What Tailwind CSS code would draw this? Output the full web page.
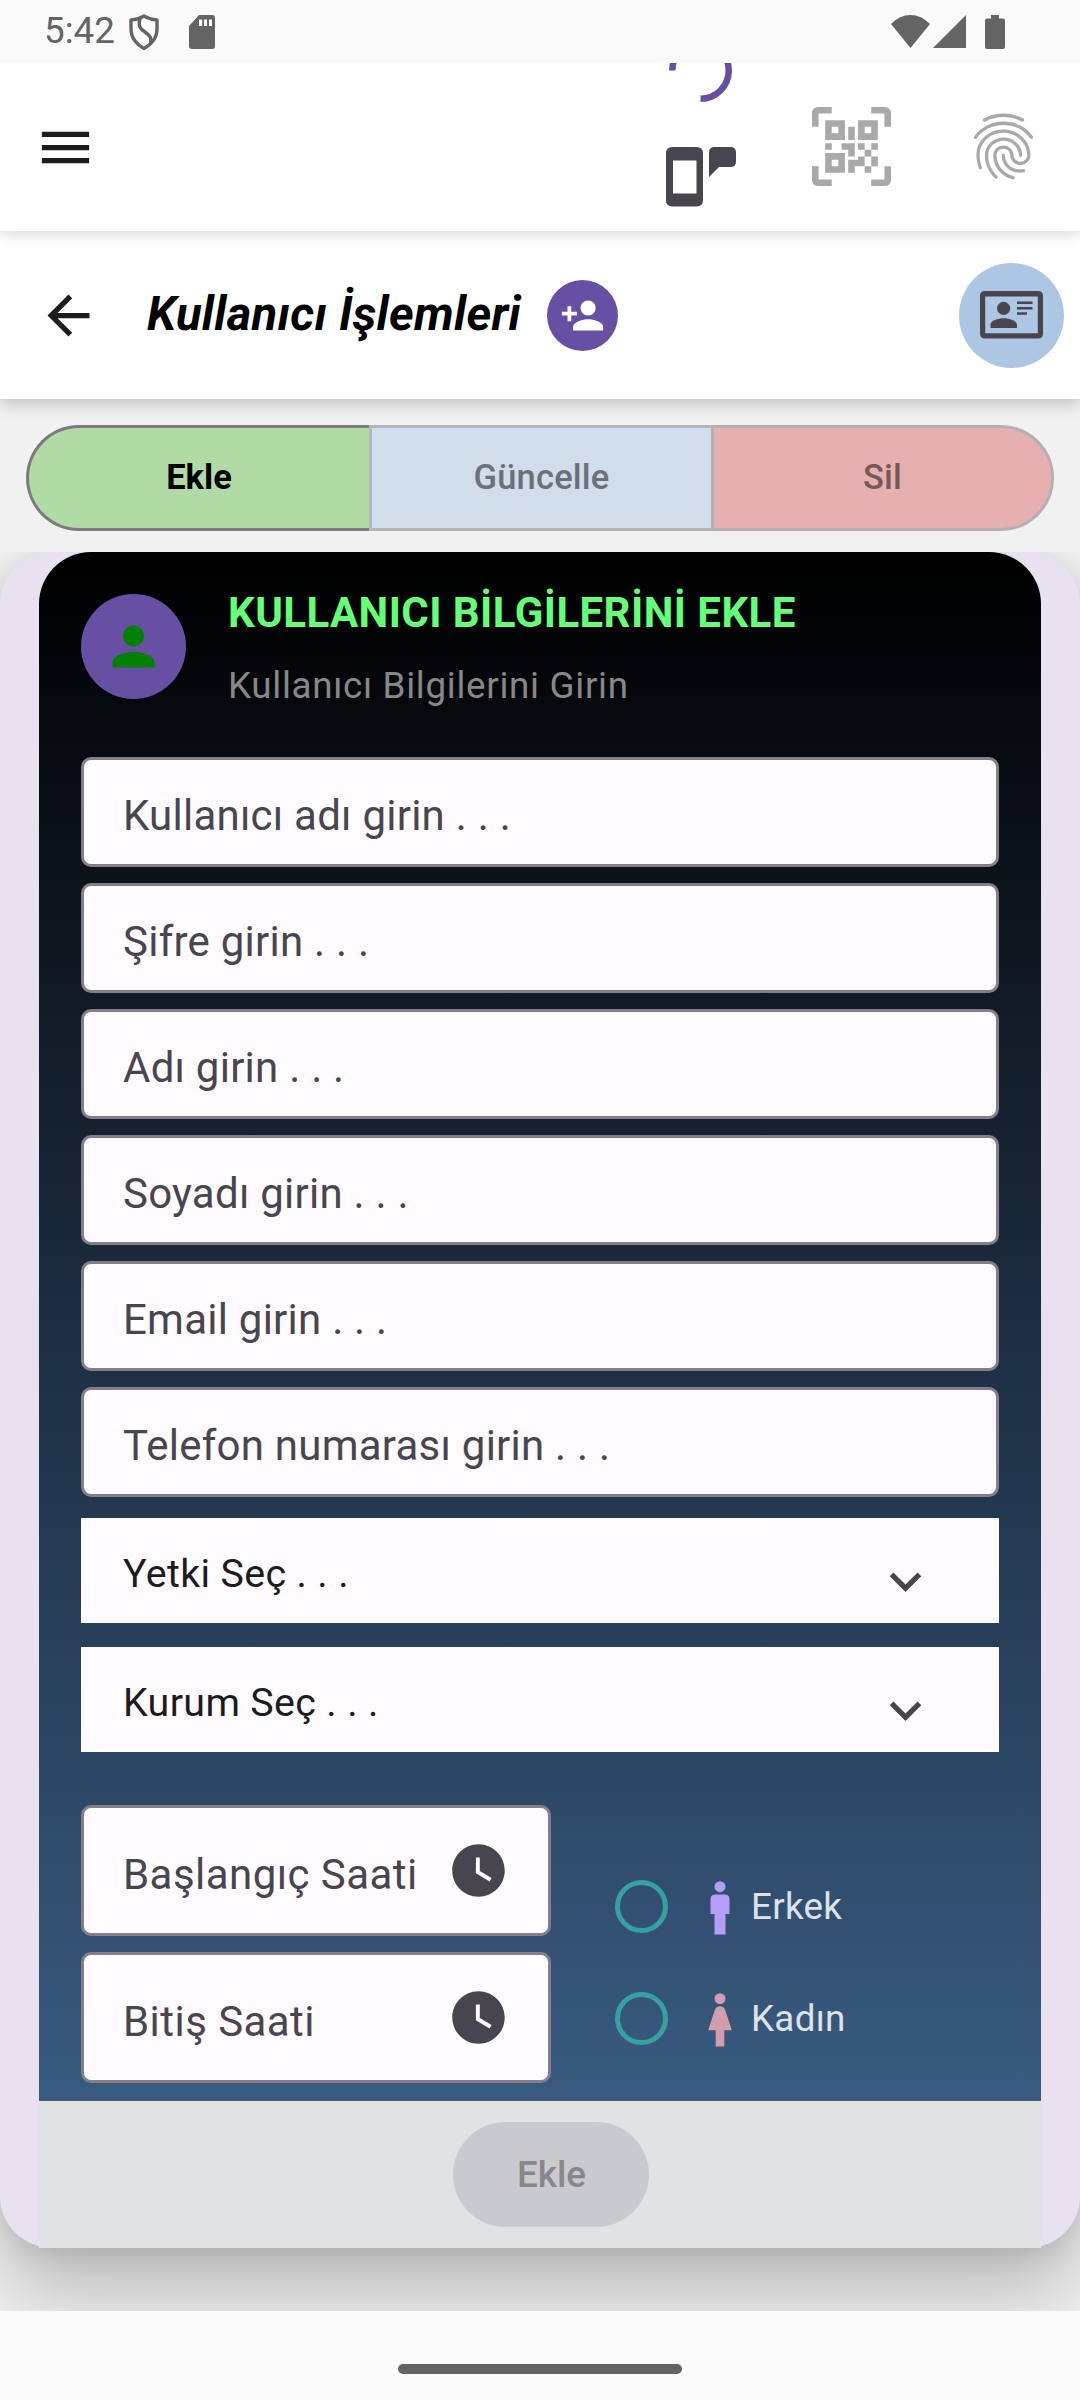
<!DOCTYPE html>
<html lang="tr">
<head>
<meta charset="utf-8">
<title>Kullanıcı İşlemleri</title>
<script src="https://cdn.jsdelivr.net/npm/@tailwindcss/browser@4"></script>
</head>
<body class="bg-[#fafafa]">
<div class="flex h-[2400px] w-[1080px] flex-col overflow-hidden font-['Roboto',sans-serif] whitespace-nowrap">

  <!-- status bar -->
  <div class="relative z-30 flex h-[63px] shrink-0 items-center bg-[#fafafa] pl-[44px] pr-[75px] text-[#646464]">
    <span class="w-[85px] text-[36.75px] leading-none">5:42</span>
    <svg class="h-[36px] w-[30px]" viewBox="0 0 30 36" fill="none" stroke="currentColor" stroke-width="3.4" stroke-linejoin="round"><path d="M15 2C11 4.500 7 5.500 2 6V15C2 24 8 31 15 34.500C22 31 28 24 28 15V6C23 5.500 19 4.500 15 2Z"/><path d="M11 4.500C9 12 11 15 16 18C21 21.500 23 24 21.500 30"/></svg>
    <svg class="ml-[30px] h-[34px] w-[26px]" viewBox="0 0 26 34" fill="currentColor" fill-rule="evenodd"><path d="M10 0H23Q26 0 26 3V31Q26 34 23 34H3Q0 34 0 31V11ZM10 4.500V11H13.200V4.500ZM15 4.500V11H18V4.500ZM20 4.500V11H23V4.500Z"/></svg>
    <svg class="ml-auto h-[33px] w-[39px]" viewBox="0 0 40 33" preserveAspectRatio="none" fill="currentColor"><path d="M20 33L0 9Q9 0 20 0Q31 0 40 9Z"/></svg>
    <svg class="ml-[3px] h-[33px] w-[33px]" viewBox="0 0 33 33" fill="currentColor"><path d="M33 0V33H0Z"/></svg>
    <svg class="ml-[19px] h-[34px] w-[20px]" viewBox="0 0 20 34" fill="currentColor"><path d="M6 0H14V3.500H18Q20 3.500 20 5.500V32Q20 34 18 34H2Q0 34 0 32V5.500Q0 3.500 2 3.500H6Z"/></svg>
  </div>

  <!-- main toolbar -->
  <header class="relative z-20 flex h-[168px] shrink-0 items-center bg-white pl-[34px] pr-[37px] shadow-[0_3px_14px_rgba(0,0,0,0.16)]">
    <svg class="size-[63px]" viewBox="0 0 24 24" fill="#1c1b1f"><path d="M3 18h18v-2H3v2zm0-5h18v-2H3v2zm0-7v2h18V6H3z"/></svg>
    <div class="ml-auto flex h-full w-[80px] flex-col items-center">
      <svg class="-mt-[24px] h-[63px] w-[63px] shrink-0" viewBox="0 0 63 63" fill="none" stroke="#6750a4" stroke-width="6.500"><path d="M3.250 31.500A28.250 28.250 0 1 1 31.500 59.750"/></svg>
      <svg class="ml-[2px] mt-[45px] h-[60px] w-[70px] shrink-0" viewBox="0 0 70 60" fill="#49454f"><path fill-rule="evenodd" d="M6.500 0H30.500Q37 0 37 6.500V53Q37 59.500 30.500 59.500H6.500Q0 59.500 0 53V6.500Q0 0 6.500 0ZM7 13.500V46.500H30.500V13.500Z"/><path d="M48.500 0H64.500Q70 0 70 5.500V14.500Q70 20 64.500 20H53L43 30V5.500Q43 0 48.500 0Z"/></svg>
    </div>
    <svg class="mb-[2px] ml-[72px] size-[79px]" viewBox="0 0 24 24" fill="#a9a9aa"><path fill-rule="evenodd" d="M6 0V2H2V6H0V2Q0 0 2 0ZM18 0H22Q24 0 24 2V6H22V2H18ZM0 18H2V22H6V24H2Q0 24 0 22ZM22 18H24V22Q24 24 22 24H18V22H22ZM4 4H10V10H4ZM6 6V8H8V6ZM14 4H20V10H14ZM16 6V8H18V6ZM4 14H10V20H4ZM6 16V18H8V16ZM11 6H13V10H11ZM4 11H6V13H4ZM9 11H13V15H11V13H9ZM14 11H16V13H14ZM18 11H20V13H18ZM16 13H18V15H16ZM11 16H14V15H16V18H13V20H11ZM18 15H20V18H18ZM16 18H18V20H16Z"/></svg>
    <svg class="mb-[2px] ml-[73px] size-[79px]" viewBox="0 0 24 24" fill="#a9a9aa"><path d="M17.810 4.470c-.08 0-.16-.02-.23-.06C15.660 3.420 14 3 12.010 3c-1.980 0-3.860.47-5.570 1.410-.24.13-.54.04-.68-.2-.13-.24-.04-.55.2-.68C7.820 2.520 9.860 2 12.010 2c2.130 0 3.990.47 6.030 1.520.25.13.34.43.21.67-.09.18-.26.28-.44.28zM3.500 9.720c-.1 0-.2-.03-.29-.09-.23-.16-.28-.47-.12-.7.99-1.400 2.250-2.500 3.750-3.270C9.980 4.040 14 4.030 17.150 5.650c1.500.77 2.760 1.860 3.750 3.250.16.22.11.54-.12.7-.23.16-.54.11-.7-.12-.9-1.260-2.040-2.250-3.390-2.940-2.870-1.470-6.540-1.470-9.400.01-1.360.7-2.500 1.700-3.400 2.960-.08.14-.23.21-.39.21zm6.250 12.070c-.13 0-.26-.05-.35-.15-.87-.87-1.340-1.430-2.010-2.640-.69-1.230-1.050-2.730-1.050-4.340 0-2.970 2.540-5.390 5.660-5.390s5.660 2.420 5.660 5.390c0 .28-.22.5-.5.5s-.5-.22-.5-.5c0-2.420-2.090-4.390-4.660-4.390-2.570 0-4.660 1.970-4.660 4.390 0 1.440.32 2.770.93 3.850.64 1.150 1.080 1.640 1.850 2.420.19.2.19.51 0 .71-.11.1-.24.15-.37.15zm7.170-1.850c-1.190 0-2.240-.3-3.100-.89-1.490-1.010-2.380-2.650-2.380-4.390 0-.28.22-.5.5-.5s.5.22.5.5c0 1.410.72 2.740 1.940 3.560.71.48 1.540.71 2.540.71.24 0 .64-.03 1.040-.1.27-.05.53.13.58.41.05.27-.13.53-.41.58-.57.11-1.070.12-1.210.12zM14.910 22c-.04 0-.09-.01-.13-.02-1.590-.44-2.630-1.030-3.720-2.100-1.400-1.390-2.170-3.240-2.170-5.220 0-1.620 1.380-2.940 3.080-2.940 1.700 0 3.080 1.320 3.080 2.940 0 1.070.93 1.940 2.080 1.940s2.080-.87 2.080-1.940c0-3.770-3.250-6.830-7.250-6.830-2.840 0-5.440 1.580-6.610 4.030-.39.81-.59 1.760-.59 2.800 0 .78.07 2.010.67 3.610.1.26-.03.55-.29.64-.26.1-.55-.04-.64-.29-.49-1.310-.73-2.610-.73-3.960 0-1.200.23-2.290.68-3.240 1.330-2.790 4.280-4.600 7.510-4.600 4.550 0 8.250 3.510 8.250 7.830 0 1.620-1.380 2.940-3.080 2.940s-3.080-1.320-3.080-2.940c0-1.070-.93-1.940-2.080-1.940s-2.080.87-2.080 1.940c0 1.710.66 3.310 1.870 4.510.95.94 1.860 1.460 3.270 1.850.27.07.42.35.35.61-.05.23-.26.38-.47.38z"/></svg>
  </header>

  <!-- page toolbar -->
  <header class="relative z-10 flex h-[168px] shrink-0 items-center bg-white pl-[37px] pr-[16px] shadow-[0_4px_16px_rgba(0,0,0,0.22)]">
    <svg class="size-[63px]" viewBox="0 0 24 24" fill="#1c1b1f"><path d="M20 11H7.830l5.590-5.590L12 4l-8 8 8 8 1.410-1.410L7.830 13H20v-2z"/></svg>
    <h1 class="ml-[47px] w-[400px] text-[47.25px] font-bold italic leading-none tracking-[0.28px] text-black">Kullanıcı İşlemleri</h1>
    <div class="flex size-[71px] items-center justify-center rounded-full bg-[#6750a4]">
      <svg class="size-[45px]" viewBox="0 0 24 24" fill="#fff"><path d="M15 12c2.210 0 4-1.790 4-4s-1.790-4-4-4-4 1.790-4 4 1.790 4 4 4zm-9-2V7H4v3H1v2h3v3h2v-3h3v-2H6zm9 4c-2.670 0-8 1.340-8 4v2h16v-2c0-2.660-5.330-4-8-4z"/></svg>
    </div>
    <div class="ml-auto flex size-[105px] items-center justify-center rounded-full bg-[#adc6e4]">
      <svg class="h-[48px] w-[63px]" viewBox="0 0 63 48" fill="#49454f"><path fill-rule="evenodd" d="M5 0H58Q63 0 63 5V42.500Q63 47.500 58 47.500H5Q0 47.500 0 42.500V5Q0 0 5 0ZM5.200 5.500V42.300H57.800V5.500Z"/><circle cx="23.600" cy="17.300" r="6.600"/><path d="M10.500 37V34C10.500 29.500 18 27.300 23.600 27.300S37 29.500 37 34V37ZM37 10.500H52.500V13H37ZM37 16H52.500V18.500H37ZM37 21.200H47V23.800H37Z"/></svg>
    </div>
  </header>

  <main class="relative z-0 flex h-[1912px] shrink-0 flex-col overflow-hidden bg-[#f1f1f1]">
    <!-- mode tabs -->
    <div class="relative z-10 flex h-[153px] shrink-0 bg-[#f1f1f1] px-[26px] pt-[26px] pb-[21px] text-[34.5px] leading-none">
      <button class="flex w-[343px] items-center justify-center rounded-l-full border-[3px] border-r-0 border-[#7d7881] bg-[#b0dba5] pb-[2px] font-bold text-black">Ekle</button>
      <button class="flex w-[342px] items-center justify-center border-[3px] border-r-0 border-[#b5b4ba] bg-[#d0ddea] pb-[2px] font-medium tracking-[0.2px] text-[#6a7178]">Güncelle</button>
      <button class="flex flex-1 items-center justify-center rounded-r-full border-[3px] border-[#b5afb4] bg-[#e6b0b0] pb-[2px] font-medium tracking-[0.2px] text-[#755959]">Sil</button>
    </div>

    <!-- form card -->
    <section class="flex h-[1696px] shrink-0 flex-col rounded-[52px] bg-[#e8e2f0] px-[39px] shadow-[0_48px_80px_rgba(0,0,0,0.22),0_4px_28px_rgba(0,0,0,0.12)]">
      <div class="flex h-[1549px] shrink-0 flex-col rounded-t-[52px] bg-[linear-gradient(to_bottom,#000000,#395b81)] px-[42px] pt-[42px]">
        <div class="flex h-[163px] shrink-0">
          <div class="flex size-[105px] items-center justify-center rounded-full bg-[#6750a4]">
            <svg class="size-[63px]" viewBox="0 0 24 24" fill="#008000"><path d="M12 12c2.210 0 4-1.790 4-4s-1.790-4-4-4-4 1.790-4 4 1.790 4 4 4zm0 2c-2.670 0-8 1.340-8 4v2h16v-2c0-2.660-5.330-4-8-4z"/></svg>
          </div>
          <div class="ml-[42px] flex flex-col">
            <h2 class="-mt-[11px] text-[42px] font-bold leading-[60px] tracking-[0.43px] text-[#66ff78]">KULLANICI BİLGİLERİNİ EKLE</h2>
            <p class="mt-[18px] text-[36.75px] leading-[50px] tracking-[0.7px] text-[#888888]">Kullanıcı Bilgilerini Girin</p>
          </div>
        </div>

        <div class="flex flex-col gap-[16px] text-[42px] leading-none tracking-[0.24px] text-[#49454f]">
          <div class="flex h-[110px] items-center rounded-[10px] border-[3px] border-[#837e88] bg-[#fffbff] pl-[39px] pt-[8px]">Kullanıcı adı girin . . .</div>
          <div class="flex h-[110px] items-center rounded-[10px] border-[3px] border-[#837e88] bg-[#fffbff] pl-[39px] pt-[8px]">Şifre girin . . .</div>
          <div class="flex h-[110px] items-center rounded-[10px] border-[3px] border-[#837e88] bg-[#fffbff] pl-[39px] pt-[8px]">Adı girin . . .</div>
          <div class="flex h-[110px] items-center rounded-[10px] border-[3px] border-[#837e88] bg-[#fffbff] pl-[39px] pt-[8px]">Soyadı girin . . .</div>
          <div class="flex h-[110px] items-center rounded-[10px] border-[3px] border-[#837e88] bg-[#fffbff] pl-[39px] pt-[8px]">Email girin . . .</div>
          <div class="flex h-[110px] items-center rounded-[10px] border-[3px] border-[#837e88] bg-[#fffbff] pl-[39px] pt-[8px]">Telefon numarası girin . . .</div>
        </div>

        <div class="mt-[21px] flex flex-col gap-[24px] text-[39.375px] leading-none tracking-[0.35px] text-[#1c1b1f]">
          <div class="flex h-[105px] items-center justify-between bg-[#fffbff] pl-[42px] pr-[62px] pt-[6px]">Yetki Seç . . .
            <svg class="mt-[16px] size-[63px]" viewBox="0 0 24 24" fill="#49454f"><path d="M16.590 8.590L12 13.170 7.410 8.590 6 10l6 6 6-6z"/></svg>
          </div>
          <div class="flex h-[105px] items-center justify-between bg-[#fffbff] pl-[42px] pr-[62px] pt-[6px]">Kurum Seç . . .
            <svg class="mt-[16px] size-[63px]" viewBox="0 0 24 24" fill="#49454f"><path d="M16.590 8.590L12 13.170 7.410 8.590 6 10l6 6 6-6z"/></svg>
          </div>
        </div>

        <div class="mt-[53px] flex">
          <div class="flex w-[470px] flex-col gap-[16px] text-[42px] leading-none tracking-[0.45px] text-[#49454f]">
            <div class="flex h-[131px] items-center justify-between rounded-[10px] border-[3px] border-[#837e88] bg-[#fffbff] pl-[39px] pr-[38px]"><span class="pt-[8px]">Başlangıç Saati</span>
              <svg class="size-[63px]" viewBox="0 0 24 24" fill="#49454f"><path d="M12 2C6.500 2 2 6.500 2 12s4.500 10 10 10 10-4.500 10-10S17.500 2 12 2zm4.200 14.200L11 13V7h1.500v5.200l4.500 2.700-.8 1.300z"/></svg>
            </div>
            <div class="flex h-[131px] items-center justify-between rounded-[10px] border-[3px] border-[#837e88] bg-[#fffbff] pl-[39px] pr-[38px]"><span class="pt-[8px]">Bitiş Saati</span>
              <svg class="size-[63px]" viewBox="0 0 24 24" fill="#49454f"><path d="M12 2C6.500 2 2 6.500 2 12s4.500 10 10 10 10-4.500 10-10S17.500 2 12 2zm4.200 14.200L11 13V7h1.500v5.200l4.500 2.700-.8 1.300z"/></svg>
            </div>
          </div>
          <div class="ml-[64px] flex flex-col pt-[45px] text-[36.75px] leading-none tracking-[0.3px] text-[#dfe3e9]">
            <label class="flex h-[112px] items-center">
              <span class="size-[53px] rounded-full border-[5px] border-[#35a1a1]"></span>
              <svg class="ml-[40px] mt-[3px] h-[54px] w-[24px]" viewBox="0 0 24 54" fill="#b69df8"><circle cx="12" cy="5.700" r="5.500"/><path d="M7.500 13.500H16.500Q21.500 13.500 21.500 18.500V33H17.500V53.500H6.500V33H2.500V18.500Q2.500 13.500 7.500 13.500Z"/></svg>
              <span class="ml-[19px] pt-[3px]">Erkek</span>
            </label>
            <label class="flex h-[112px] items-center">
              <span class="size-[53px] rounded-full border-[5px] border-[#35a1a1]"></span>
              <svg class="ml-[40px] mt-[3px] h-[54px] w-[24px]" viewBox="0 0 24 54" fill="#d29dac"><circle cx="12" cy="5.700" r="5.500"/><path d="M12 13.300Q15.800 13.300 17.200 17L23.800 37.300H16.300V53.500H7.700V37.300H.2L6.800 17Q8.200 13.300 12 13.300Z"/></svg>
              <span class="ml-[19px] pt-[3px]">Kadın</span>
            </label>
          </div>
        </div>
      </div>
      <div class="flex h-[147px] shrink-0 items-center justify-center bg-[#e1e2e4]">
        <button class="ml-[22px] flex h-[105px] w-[196px] items-center justify-center rounded-full bg-[#c9cacd] pl-px pt-px text-[36.75px] font-medium leading-none text-[#88868b]">Ekle</button>
      </div>
    </section>
  </main>

  <!-- gesture bar -->
  <div class="relative z-10 flex h-[89px] shrink-0 justify-center bg-[#fafafa] pt-[53px]">
    <div class="h-[10px] w-[284px] rounded-full bg-[#646464]"></div>
  </div>
</div>
</body>
</html>
